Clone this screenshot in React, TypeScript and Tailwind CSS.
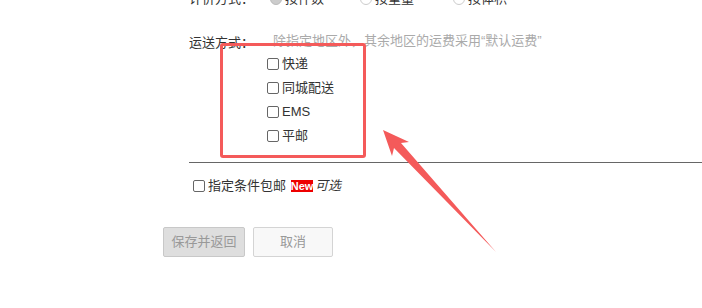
export default function App() {
  const methods = ['快递', '同城配送', 'EMS', '平邮'];
  const pricing = [
    { label: '按件数', checked: true, w: 'w-[90px]' },
    { label: '按重量', checked: false, w: 'w-[93px]' },
    { label: '按体积', checked: false, w: 'w-[90px]' },
  ];

  return (
    <div className="relative h-[308px] w-[702px] overflow-hidden bg-white font-['Liberation_Sans','Noto_Sans_CJK_SC',sans-serif] text-[13px] text-[#333]">
      {/* 计价方式 (cut off at the top) */}
      <div className="-mt-[11px] flex h-[20px] items-center pl-[189px]">
        <span className="w-[81px]">计价方式：</span>
        {pricing.map((p) => (
          <label key={p.label} className={`flex items-center ${p.w}`}>
            <span
              className={
                p.checked
                  ? 'h-[12px] w-[12px] rounded-full border border-[#bbb] bg-[#ccc]'
                  : 'h-[12px] w-[12px] rounded-full border border-[#ccc] bg-white'
              }
            />
            <span className="ml-[3px] text-[#333]">{p.label}</span>
          </label>
        ))}
      </div>

      {/* 运送方式 */}
      <div className="mt-[22px] flex h-[20px] items-center pl-[189px]">
        <span className="w-[84px] pt-[4px]">运送方式：</span>
        <span className="text-[#aaa]">除指定地区外，其余地区的运费采用“默认运费”</span>
      </div>

      <div className="mt-[1px] flex flex-col pl-[267px]">
        {methods.map((m) => (
          <label key={m} className="flex h-[24px] items-center">
            <span className="h-[12px] w-[12px] rounded-[2px] border border-[#666] bg-white" />
            <span className="ml-[3px]">{m}</span>
          </label>
        ))}
      </div>

      <div className="ml-[189px] mt-[14px] border-t border-[#666]" />

      {/* 指定条件包邮 */}
      <div className="mt-[13px] flex h-[20px] items-center pl-[193px]">
        <span className="h-[12px] w-[12px] rounded-[2px] border border-[#666] bg-white" />
        <span className="ml-[3px]">指定条件包邮</span>
        <span className="ml-[5px] flex h-[12px] w-[22px] items-center justify-center bg-[#e00] text-[11px] font-bold leading-none text-white">New</span>
        <span className="ml-[2px] italic">可选</span>
      </div>

      {/* buttons */}
      <div className="mt-[31px] flex gap-[8px] pl-[163px]">
        <button className="h-[30px] w-[82px] rounded-[2px] border border-[#c8c8c8] bg-[#dedede] text-[13px] text-[#999]">
          保存并返回
        </button>
        <button className="h-[30px] w-[80px] rounded-[2px] border border-[#d4d4d4] bg-[#f8f8f8] text-[13px] text-[#999]">
          取消
        </button>
      </div>

      {/* annotation overlay */}
      <div className="absolute left-[220px] top-[43px] h-[115px] w-[146px] rounded-[3px] border-[3px] border-[#f45a5a]" />
      <svg className="absolute left-0 top-0" width="702" height="308" viewBox="0 0 702 308">
        <polygon
          points="383,130 409,142 401,143 496,252 394,148 392,156"
          fill="#f45a5a"
        />
      </svg>
    </div>
  );
}
